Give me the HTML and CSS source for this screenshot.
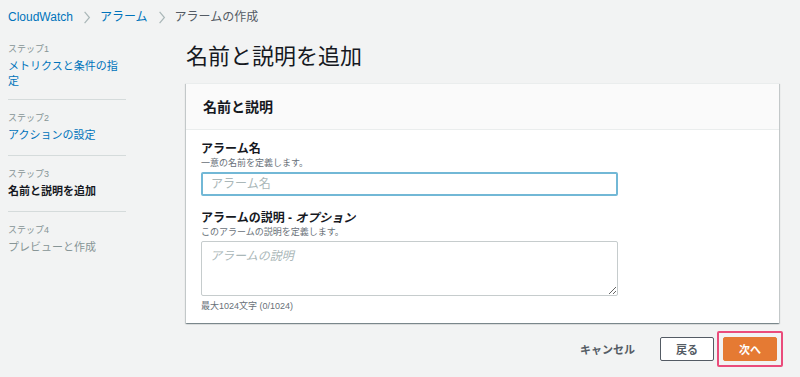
FILE: index.html
```html
<!DOCTYPE html>
<html lang="ja">

<head>
    <meta charset="UTF-8">
    <meta name="viewport" content="width=device-width, initial-scale=1.0">
    <title>アラームの作成</title>
    <link rel="stylesheet" href="styles.css">
</head>

<body>

    <nav class="breadcrumb">
        <a class="crumb-link">CloudWatch</a>
        <svg class="crumb-sep" viewBox="0 0 10 16" width="8" height="13"><path d="M2 1l6 7-6 7" fill="none" stroke="#aab7b8" stroke-width="1.5"/></svg>
        <a class="crumb-link">アラーム</a>
        <svg class="crumb-sep" viewBox="0 0 10 16" width="8" height="13"><path d="M2 1l6 7-6 7" fill="none" stroke="#aab7b8" stroke-width="1.5"/></svg>
        <span class="crumb-current">アラームの作成</span>
    </nav>

    <div class="layout">
        <ul class="steps">
            <li class="step">
                <div class="step-num">ステップ1</div>
                <div class="step-title link">メトリクスと条件の指定</div>
            </li>
            <li class="step">
                <div class="step-num">ステップ2</div>
                <div class="step-title link">アクションの設定</div>
            </li>
            <li class="step">
                <div class="step-num">ステップ3</div>
                <div class="step-title current">名前と説明を追加</div>
            </li>
            <li class="step">
                <div class="step-num">ステップ4</div>
                <div class="step-title disabled">プレビューと作成</div>
            </li>
        </ul>

        <main class="main">
            <h1 class="page-title">名前と説明を追加</h1>

            <section class="card">
                <div class="card-header">名前と説明</div>
                <div class="card-body">
                    <div class="field">
                        <div class="field-label">アラーム名</div>
                        <div class="field-desc">一意の名前を定義します。</div>
                        <input class="input" type="text" placeholder="アラーム名">
                    </div>
                    <div class="field">
                        <div class="field-label">アラームの説明 - <i>オプション</i></div>
                        <div class="field-desc">このアラームの説明を定義します。</div>
                        <textarea class="textarea" placeholder="アラームの説明"></textarea>
                        <div class="field-hint">最大1024文字 (0/1024)</div>
                    </div>
                </div>
            </section>

            <div class="actions">
                <button class="btn btn-link">キャンセル</button>
                <button class="btn btn-normal">戻る</button>
                <span class="highlight">
                    <button class="btn btn-primary">次へ</button>
                </span>
            </div>
        </main>
    </div>

</body>

</html>
```

FILE: styles.css
```css
html,
body {
    margin: 0
}

body {
    background-color: #f2f3f3;
    font-family: "Liberation Sans", "Noto Sans CJK JP", sans-serif;
    color: #16191f;
    height: 377px;
    overflow: hidden;
}

.breadcrumb {
    display: flex;
    align-items: center;
    padding: 10px 8px;
    font-size: 12px;
    line-height: 14px;
}

.crumb-link {
    color: #0073bb;
}

.crumb-sep {
    margin: 0 9px 0 10px;
}

.crumb-current {
    color: #545b64;
}

.layout {
    display: flex;
}

.steps {
    list-style: none;
    margin: 0;
    padding: 8px 0 0 8px;
    width: 118px;
    flex-shrink: 0;
}

.step {
    padding: 11px 0 12px;
    border-bottom: 1px solid #d5dbdb;
}

.step:first-child {
    padding-top: 0;
    padding-bottom: 10px;
}

.step:last-child {
    border-bottom: none;
}

.step-num {
    font-size: 9px;
    line-height: 14px;
    color: #879596;
    margin-bottom: 3px;
}

.step-title {
    font-size: 11px;
    line-height: 15px;
}

.step-title.link {
    color: #0073bb;
}

.step-title.current {
    font-weight: bold;
    color: #16191f;
}

.step-title.disabled {
    color: #879596;
}

.main {
    flex: 1;
    margin-left: 60px;
    margin-right: 21px;
}

.page-title {
    margin: 8px 0 11px;
    font-size: 22px;
    line-height: 30px;
    font-weight: normal;
    color: #16191f;
}

.card {
    background: #fff;
    border-top: 1px solid #eaeded;
    box-shadow: 0 1px 1px 0 rgba(0, 28, 36, 0.3), 1px 1px 1px 0 rgba(0, 28, 36, 0.15), -1px 1px 1px 0 rgba(0, 28, 36, 0.15);
}

.card-header {
    background: #fafafa;
    border-bottom: 1px solid #eaeded;
    height: 45px;
    line-height: 46px;
    padding-left: 17px;
    font-size: 14px;
    font-weight: bold;
}

.card-body {
    padding: 11px 15px 11px;
}

.field {
    width: 417px;
}

.field + .field {
    margin-top: 14px;
}

.field-label {
    font-size: 12px;
    line-height: 16px;
    font-weight: bold;
    color: #16191f;
}

.field-desc {
    font-size: 9px;
    line-height: 12px;
    color: #687078;
    margin-bottom: 3px;
}

.input,
.textarea {
    display: block;
    box-sizing: border-box;
    width: 100%;
    margin: 0;
    font-family: inherit;
    font-size: 12px;
    color: #16191f;
    background: #fff;
    border-radius: 2px;
}

.input {
    height: 24px;
    padding: 0 8px;
    border: 2px solid #72b8d6;
    outline: none;
}

.textarea {
    height: 55px;
    padding: 4px 8px;
    border: 1px solid #c6cccd;
    resize: vertical;
}

.input::placeholder {
    color: #aab7b8;
}

.textarea::placeholder {
    color: #aab7b8;
    font-style: italic;
}

.field-hint {
    font-size: 9px;
    line-height: 12px;
    color: #687078;
    margin-top: 4px;
}

.actions {
    display: flex;
    justify-content: flex-end;
    align-items: center;
    margin-top: 8px;
    margin-right: -4px;
}

.btn {
    font-family: inherit;
    font-size: 11px;
    font-weight: bold;
    height: 24px;
    padding: 0;
    border-radius: 2px;
    cursor: pointer;
}

.btn-link {
    background: none;
    border: none;
    color: #545b64;
    margin-right: 25px;
}

.btn-normal {
    width: 54px;
    background: #fff;
    border: 1px solid #545b64;
    color: #545b64;
    margin-right: 3px;
}

.highlight {
    display: flex;
    padding: 4px;
    border: 2px solid #ea4c7b;
    border-radius: 2px;
}

.btn-primary {
    width: 54px;
    background: #e57a33;
    border: 1px solid #e57a33;
    color: #fff;
}
```
